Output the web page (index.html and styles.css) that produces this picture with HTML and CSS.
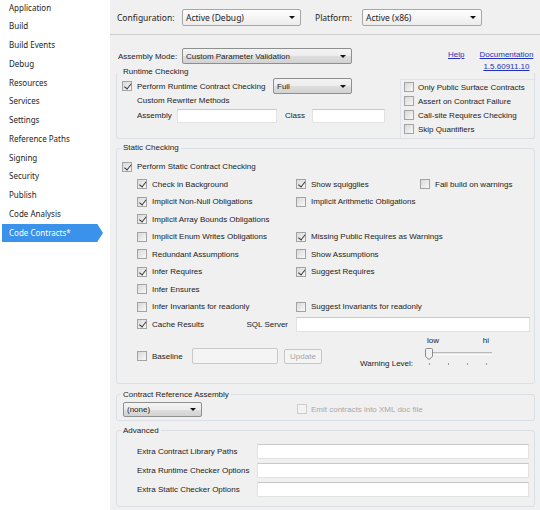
FILE: index.html
```html
<!DOCTYPE html>
<html lang="en">
<head>
  <meta charset="utf-8">
  <title>Code Contracts</title>
  <link rel="stylesheet" href="styles.css">
</head>
<body>
  <div class="window">
    <ul class="tabs">
      <li>Application</li>
      <li>Build</li>
      <li>Build Events</li>
      <li>Debug</li>
      <li>Resources</li>
      <li>Services</li>
      <li>Settings</li>
      <li>Reference Paths</li>
      <li>Signing</li>
      <li>Security</li>
      <li>Publish</li>
      <li>Code Analysis</li>
      <li class="active">Code Contracts*</li>
    </ul>
    <div class="page">
      <div class="toolbar">
        <span class="tb-label cfg">Configuration:</span>
        <div class="combo top w-cfg">Active (Debug)</div>
        <span class="tb-label plat">Platform:</span>
        <div class="combo top w-plat">Active (x86)</div>
      </div>
      <div class="content">
        <div class="mode-row">
          <span class="mode-label">Assembly Mode:</span>
          <div class="combo w-mode">Custom Parameter Validation</div>
          <a class="link help">Help</a>
          <div class="docs">
            <a class="link">Documentation</a>
            <a class="link">1.5.60911.10</a>
          </div>
        </div>

        <fieldset class="group runtime">
          <legend>Runtime Checking</legend>
          <div class="runtime-body">
            <div class="runtime-left">
              <div class="rt-row1">
                <label class="chk rt-check"><span class="cb on"></span>Perform Runtime Contract Checking</label>
                <div class="combo w-full">Full</div>
              </div>
              <div class="rt-row2">Custom Rewriter Methods</div>
              <div class="rt-row3">
                <span class="asm-label">Assembly</span>
                <span class="field w-asm"></span>
                <span class="class-label">Class</span>
                <span class="field w-class"></span>
              </div>
            </div>
            <div class="runtime-right">
              <label class="chk"><span class="cb"></span>Only Public Surface Contracts</label>
              <label class="chk"><span class="cb"></span>Assert on Contract Failure</label>
              <label class="chk"><span class="cb"></span>Call-site Requires Checking</label>
              <label class="chk"><span class="cb"></span>Skip Quantifiers</label>
            </div>
          </div>
        </fieldset>

        <fieldset class="group static">
          <legend>Static Checking</legend>
          <div class="perform-row">
            <label class="chk"><span class="cb on"></span>Perform Static Contract Checking</label>
          </div>
          <div class="static-grid">
            <label class="chk"><span class="cb on"></span>Check in Background</label>
            <label class="chk"><span class="cb on"></span>Show squigglies</label>
            <label class="chk"><span class="cb"></span>Fail build on warnings</label>

            <label class="chk"><span class="cb on"></span>Implicit Non-Null Obligations</label>
            <label class="chk"><span class="cb"></span>Implicit Arithmetic Obligations</label>
            <span></span>

            <label class="chk"><span class="cb on"></span>Implicit Array Bounds Obligations</label>
            <span></span>
            <span></span>

            <label class="chk"><span class="cb"></span>Implicit Enum Writes Obligations</label>
            <label class="chk wide"><span class="cb on"></span>Missing Public Requires as Warnings</label>

            <label class="chk"><span class="cb"></span>Redundant Assumptions</label>
            <label class="chk wide"><span class="cb"></span>Show Assumptions</label>

            <label class="chk"><span class="cb on"></span>Infer Requires</label>
            <label class="chk wide"><span class="cb on"></span>Suggest Requires</label>

            <label class="chk"><span class="cb"></span>Infer Ensures</label>
            <span class="wide"></span>

            <label class="chk"><span class="cb"></span>Infer Invariants for readonly</label>
            <label class="chk wide"><span class="cb"></span>Suggest Invariants for readonly</label>

            <div class="cache-cell">
              <label class="chk"><span class="cb on"></span>Cache Results</label>
              <span class="sql-label">SQL Server</span>
            </div>
            <div class="wide sql-cell"><span class="field sql"></span></div>
          </div>
          <div class="static-bottom">
            <div class="baseline">
              <span class="cb"></span>
              <span class="baseline-label">Baseline</span>
              <span class="field off w-base"></span>
              <span class="btn off">Update</span>
            </div>
            <div class="warn">
              <span class="warn-label">Warning Level:</span>
              <div class="slider-col">
                <div class="lowhi"><span>low</span><span>hi</span></div>
                <div class="slider">
                  <svg class="thumb" width="8" height="12" viewBox="0 0 8 12"><path d="M1.5 0.5h5a1 1 0 0 1 1 1v7l-3.5 3l-3.5-3v-7a1 1 0 0 1 1-1z" fill="#f2f2f2" stroke="#8a8a8a"/></svg>
                  <span class="track"></span>
                </div>
                <div class="ticks"><i></i><i></i><i></i><i></i></div>
              </div>
            </div>
          </div>
        </fieldset>

        <fieldset class="group refasm">
          <legend>Contract Reference Assembly</legend>
          <div class="ref-row">
            <div class="combo w-none">(none)</div>
            <label class="chk off emit"><span class="cb"></span>Emit contracts into XML doc file</label>
          </div>
        </fieldset>

        <fieldset class="group advanced">
          <legend>Advanced</legend>
          <div class="adv-row"><span class="adv-label">Extra Contract Library Paths</span><span class="field adv"></span></div>
          <div class="adv-row"><span class="adv-label">Extra Runtime Checker Options</span><span class="field adv"></span></div>
          <div class="adv-row"><span class="adv-label">Extra Static Checker Options</span><span class="field adv"></span></div>
        </fieldset>
      </div>
    </div>
  </div>
</body>
</html>
```

FILE: styles.css
```css
*{
  box-sizing: border-box;
}
body{
  margin: 0;
  width: 540px;
  height: 510px;
  overflow: hidden;
  font-family: "Liberation Sans", Arial, sans-serif;
  font-size: 8px;
  color: #222;
}
.window{
  display: flex;
  height: 510px;
}

/* left tab strip */
.tabs{
  list-style: none;
  margin: 0;
  padding: 0;
  width: 110px;
  flex: none;
  background: #fff;
  font-family: "Noto Sans", sans-serif;
  font-size: 8px;
  color: #1e1e1e;
}
.tabs li{
  height: 18.75px;
  line-height: 18.75px;
  margin-left: 2px;
  padding-left: 7px;
}
.tabs li:first-child{
  margin-top: -1.4px;
}
.tabs li.active{
  width: 101px;
  background: #3b92ea;
  color: #fff;
  clip-path: polygon(0 0, 95px 0, 101px 50%, 95px 100%, 0 100%);
}

/* right page */
.page{
  flex: 1;
  background: #f0f0f0;
  display: flex;
  flex-direction: column;
}
.toolbar{
  height: 35px;
  flex: none;
  border-bottom: 1px solid #cdcdcd;
  display: flex;
  align-items: center;
  padding-left: 7px;
  font-family: "Noto Sans", sans-serif;
  font-size: 8.5px;
}
.tb-label.cfg{
  width: 65px;
}
.tb-label.plat{
  width: 47px;
  margin-left: 14px;
}
.content{
  padding: 0 5px 0 6px;
}

/* combo boxes */
.combo{
  height: 16px;
  border: 1px solid #8e8f8f;
  border-radius: 2px;
  background: linear-gradient(#f4f4f4 0%, #ececec 50%, #dedede 51%, #d2d2d2 100%);
  display: flex;
  align-items: center;
  padding-left: 3px;
  white-space: nowrap;
  flex: none;
}
.combo::after{
  content: "";
  margin-left: auto;
  margin-right: 5px;
  border-left: 3px solid transparent;
  border-right: 3px solid transparent;
  border-top: 3px solid #111;
}
.combo.top{
  height: 17px;
  border-color: #a7a7a7;
  background: linear-gradient(#fefefe, #ececec);
}
.w-cfg{ width: 119px; }
.w-plat{ width: 120px; }
.w-mode{ width: 170px; }
.w-full{ width: 79px; }
.w-none{ width: 79px; }

/* text fields */
.field{
  display: block;
  height: 15px;
  background: #fff;
  border: 1px solid #e2e2e2;
  border-top-color: #c8c8c8;
  flex: none;
}
.field.off{
  background: #f4f4f4;
  border: 1px solid #c9c9c9;
  border-radius: 2px;
}
.btn{
  height: 15px;
  width: 38px;
  border: 1px solid #c6c6c6;
  border-radius: 2px;
  background: #f4f4f4;
  color: #a6a6a6;
  display: flex;
  align-items: center;
  justify-content: center;
  margin-left: 6px;
}

/* checkboxes */
.chk{
  display: flex;
  align-items: center;
  white-space: nowrap;
}
.cb{
  position: relative;
  width: 10px;
  height: 10px;
  flex: none;
  margin-right: 5px;
  border: 1px solid #a3a3a3;
  background: linear-gradient(135deg, #d9d9d9, #f8f8f8);
}
.cb.on::after{
  content: "";
  position: absolute;
  left: 2.5px;
  top: 0;
  width: 2.5px;
  height: 5.5px;
  border: solid #3a3a3a;
  border-width: 0 1.3px 1.3px 0;
  transform: rotate(38deg);
}
.chk.off{
  color: #a8a8a8;
}
.chk.off .cb{
  border-color: #cecece;
  background: #f3f3f3;
}

/* assembly mode row */
.mode-row{
  height: 16px;
  margin-top: 13px;
  padding-left: 2px;
  display: flex;
  align-items: center;
}
.mode-label{
  width: 64px;
}
.link{
  color: #2233bb;
  text-decoration: underline;
  line-height: 12px;
}
.help{
  margin-left: 96px;
  align-self: flex-start;
  margin-top: 1px;
}
.docs{
  align-self: flex-start;
  margin-top: 1px;
  margin-left: 15px;
  width: 54px;
  display: flex;
  flex-direction: column;
  align-items: center;
}

/* group boxes */
.group{
  margin: 0;
  padding: 0;
  min-width: 0;
  border: 1px solid #d9dfe4;
  border-radius: 3px;
}
.group legend{
  line-height: 12px;
  padding: 0 2px;
  margin-left: 4px;
}
.runtime{
  margin-top: 2px;
  border-top-color: transparent;
}
.static{
  margin-top: 3px;
}
.refasm{
  margin-top: 5px;
}
.advanced{
  margin-top: 4px;
  padding: 5.5px 0 7px;
}

/* runtime checking */
.runtime-body{
  display: flex;
}
.runtime-left{
  width: 283px;
  padding-bottom: 15px;
}
.rt-row1{
  height: 16px;
  padding-left: 5px;
  display: flex;
  align-items: center;
}
.rt-check{
  width: 151px;
}
.rt-row2{
  height: 14px;
  line-height: 14px;
  padding-left: 20px;
}
.rt-row3{
  height: 15px;
  padding-left: 20px;
  display: flex;
  align-items: center;
}
.asm-label{
  width: 40px;
}
.w-asm{ width: 100px; height: 14px; }
.class-label{
  width: 27px;
  margin-left: 8px;
}
.w-class{ width: 73px; height: 14px; }
.runtime-right{
  flex: 1;
  margin-top: 1px;
  padding: 0 0 2px 3px;
  border-top: 1px solid #e0e4e8;
  border-left: 1px solid #e0e4e8;
}
.runtime-right .chk{
  height: 14px;
}
.runtime-right .cb{
  margin-right: 4px;
}

/* static checking */
.perform-row{
  height: 17.5px;
  margin-top: 4px;
  padding-left: 5px;
  display: flex;
  align-items: center;
}
.static-grid{
  margin-left: 20px;
  display: grid;
  grid-template-columns: 159px 124px 1fr;
  grid-auto-rows: 17.5px;
  align-items: center;
}
.static-grid .wide{
  grid-column: 2 / 4;
}
.cache-cell{
  display: flex;
  align-items: center;
}
.sql-label{
  margin-left: auto;
  margin-right: 8px;
}
.sql-cell{
  padding-right: 4px;
}
.field.sql{
  width: 100%;
}
.static-bottom{
  height: 49.5px;
  padding-left: 20px;
  display: flex;
  align-items: flex-start;
}
.baseline{
  height: 16px;
  margin-top: 15px;
  display: flex;
  align-items: center;
}
.baseline-label{
  width: 40px;
}
.w-base{
  width: 86px;
  height: 16px;
}
.warn{
  margin-left: 38px;
  display: flex;
  align-items: flex-start;
}
.warn-label{
  width: 65px;
  line-height: 10px;
  margin-top: 26px;
}
.slider-col{
  width: 67px;
  margin-top: 3px;
}
.lowhi{
  height: 10px;
  line-height: 10px;
  padding: 0 3px 0 2px;
  display: flex;
  justify-content: space-between;
}
.slider{
  height: 14px;
  display: flex;
  align-items: center;
}
.thumb{
  flex: none;
  margin-top: 1px;
}
.track{
  flex: 1;
  height: 3px;
  border-top: 1px solid #b9b9b9;
  border-bottom: 1px solid #fbfbfb;
  background: #e4e4e4;
}
.ticks{
  height: 5px;
  padding: 0 5px 0 4px;
  display: flex;
  justify-content: space-between;
  align-items: flex-end;
}
.ticks i{
  width: 1px;
  height: 2px;
  background: #9a9a9a;
}

/* contract reference assembly */
.ref-row{
  height: 15px;
  margin: 1px 0 3px;
  padding-left: 6px;
  display: flex;
  align-items: center;
}
.ref-row .combo{
  height: 15px;
}
.emit{
  margin-left: 95px;
}
.emit .cb{
  margin-right: 4px;
}

/* advanced */
.adv-row{
  height: 19px;
  padding: 0 5px 0 20px;
  display: flex;
  align-items: center;
}
.adv-label{
  width: 120px;
}
.field.adv{
  flex: 1;
}
```
